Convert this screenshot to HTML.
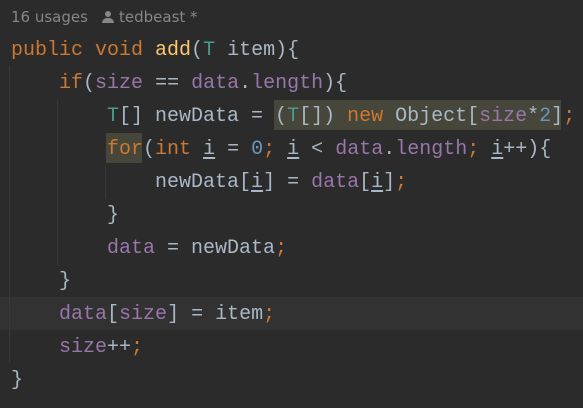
<html><head><style>
body{margin:0;width:583px;height:408px;background:#2b2b2b;overflow:hidden;position:relative;font-family:"Liberation Mono",monospace;}
.hdr{position:absolute;left:11px;top:8px;font:15px "DejaVu Sans","Liberation Sans",sans-serif;color:#878787;white-space:pre;}
.l{position:absolute;left:11px;height:33px;line-height:33px;font-size:20px;color:#a9b7c6;white-space:pre;}
.k{color:#cc7832}.f{color:#ffc66d}.t{color:#4e9a8e}.p{color:#9876aa}.n{color:#6897bb}.s{color:#cc7832}
.g{position:absolute;width:1px;background:#393939}
u{text-decoration:underline;text-underline-offset:3px}
</style></head><body>
<div class="hdr">16 usages   <span style="display:inline-block;position:relative;width:12px;height:12px;vertical-align:-1px"><span style="position:absolute;left:3px;top:0;width:6px;height:6px;border-radius:50%;background:#878787"></span><span style="position:absolute;left:0;top:7px;width:12px;height:5px;border-radius:5px 5px 0 0;background:#878787"></span></span> tedbeast *</div>
<div style="position:absolute;left:0;top:297px;width:583px;height:33px;background:#323232"></div>
<div style="position:absolute;left:274px;top:100px;width:287px;height:30px;background:#46463a"></div>
<div style="position:absolute;left:106px;top:133px;width:36px;height:30px;background:#46463a"></div>
<div class="g" style="left:9px;top:66px;height:297px"></div>
<div class="g" style="left:57px;top:100px;height:165px"></div>
<div class="g" style="left:105px;top:166px;height:33px"></div>
<div class="l" style="top:34px"><span class="k">public void </span><span class="f">add</span>(<span class="t">T</span> item){</div>
<div class="l" style="top:67px">    <span class="k">if</span>(<span class="p">size</span> == <span class="p">data</span>.<span class="p">length</span>){</div>
<div class="l" style="top:100px">        <span class="t">T</span>[] newData = (<span class="t">T</span>[]) <span class="k">new</span> Object[<span class="p">size</span>*<span class="n">2</span>]<span class="s">;</span></div>
<div class="l" style="top:133px">        <span class="k">for</span>(<span class="k">int</span> <u>i</u> = <span class="n">0</span><span class="s">;</span> <u>i</u> &lt; <span class="p">data</span>.<span class="p">length</span><span class="s">;</span> <u>i</u>++){</div>
<div class="l" style="top:166px">            newData[<u>i</u>] = <span class="p">data</span>[<u>i</u>]<span class="s">;</span></div>
<div class="l" style="top:199px">        }</div>
<div class="l" style="top:232px">        <span class="p">data</span> = newData<span class="s">;</span></div>
<div class="l" style="top:265px">    }</div>
<div class="l" style="top:298px">    <span class="p">data</span>[<span class="p">size</span>] = item<span class="s">;</span></div>
<div class="l" style="top:331px">    <span class="p">size</span>++<span class="s">;</span></div>
<div class="l" style="top:364px">}</div>
</body></html>
